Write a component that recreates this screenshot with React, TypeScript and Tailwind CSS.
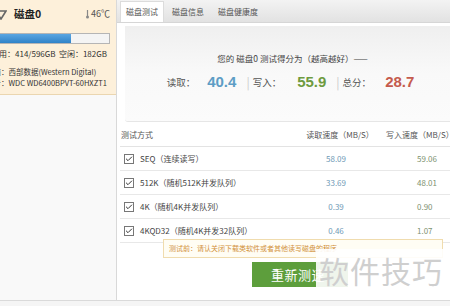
import { Check } from 'lucide-react'

const rows = [
  { name: 'SEQ（连续读写）', read: '58.09', write: '59.06' },
  { name: '512K（随机512K并发队列）', read: '33.69', write: '48.01' },
  { name: '4K（随机4K并发队列）', read: '0.39', write: '0.90' },
  { name: '4KQD32（随机4K并发32队列）', read: '0.46', write: '1.07' },
]

function DiskPanel() {
  return (
    <div className="w-[117px] shrink-0 flex flex-col border-r border-[#d9d9d9] bg-[#f9f9f9] overflow-hidden">
      <div className="h-[95px] bg-[#fdf0da] border-b border-[#ebd6b0] text-[#333]">
        <div className="h-[28px] flex items-center">
          <svg width="12" height="10" viewBox="0 0 12 10" className="-ml-[5px] mt-[1px]">
            <path d="M1 1 L11 1 L6 9 Z" fill="none" stroke="#666" strokeWidth="1.6" />
          </svg>
          <span className="ml-[7px] text-[10.5px] font-bold text-[#222]">磁盘0</span>
          <span className="ml-auto mr-[6px] flex items-center text-[9px] text-[#555]">
            <svg width="5" height="10" viewBox="0 0 5 10" className="mr-[1px]">
              <path d="M2.5 1 V7" stroke="#888" strokeWidth="1.2" />
              <circle cx="2.5" cy="8" r="1.5" fill="#888" />
            </svg>
            46℃
          </span>
        </div>
        <div className="h-[11px] mt-[5px] mr-[6px] -ml-[2px] border border-[#b5b5b5] bg-[#f4f4f4] flex">
          <div className="w-[72px] h-full bg-gradient-to-b from-[#5aa6e2] to-[#2f83c8]" />
        </div>
        <div className="mt-[4px] flex text-[8px] leading-[12px]">
          <span className="-ml-[9px]">已用：414/596GB</span>
          <span className="ml-auto mr-[9px]">空闲：182GB</span>
        </div>
        <div className="mt-[6px] text-[7.5px] leading-[11px] whitespace-nowrap">
          <div className="-ml-[14px]">厂商：西部数据(Western Digital)</div>
          <div className="-ml-[14px]">型号：WDC WD6400BPVT-60HXZT1</div>
        </div>
      </div>
    </div>
  )
}

function Tabs() {
  return (
    <div className="h-[23px] shrink-0 bg-gradient-to-b from-[#f3f3f3] to-[#e2e2e2] border-b border-[#d6d6d6] flex items-end text-[8px] text-[#555]">
      <div className="ml-[3px] h-[21px] w-[44px] bg-white flex items-center justify-center border-t border-x border-[#dcdcdc]">
        磁盘测试
      </div>
      <div className="h-[21px] ml-[8px] flex items-center">磁盘信息</div>
      <div className="h-[21px] ml-[14px] flex items-center">磁盘健康度</div>
    </div>
  )
}

function ScorePanel() {
  return (
    <div className="ml-[8px] mt-[3px] h-[96px] bg-gradient-to-b from-[#efefef] via-[#f9f9f9] to-[#fbfbfb] border-b border-[#e6e6e6] rounded-bl-[3px] flex flex-col items-center">
      <div className="mt-[26px] text-[8.5px] text-[#444] pl-[10px]">您的 磁盘0 测试得分为（越高越好）——</div>
      <div className="mt-[6px] flex items-center text-[#555] ml-[6px]">
        <span className="text-[9.5px]">读取：</span>
        <span className="ml-[12px] text-[15px] font-bold text-[#5d9dc5] font-['Liberation_Sans',sans-serif]">40.4</span>
        <span className="ml-[10px] mr-[3px] text-[12px] text-[#ccc]">|</span>
        <span className="text-[9.5px]">写入：</span>
        <span className="ml-[16px] text-[15px] font-bold text-[#6e9b40] font-['Liberation_Sans',sans-serif]">55.9</span>
        <span className="ml-[10px] mr-[3px] text-[12px] text-[#ccc]">|</span>
        <span className="text-[9.5px]">总分：</span>
        <span className="ml-[14px] text-[15px] font-bold text-[#c55b4d] font-['Liberation_Sans',sans-serif]">28.7</span>
      </div>
    </div>
  )
}

function ResultTable() {
  return (
    <div className="ml-[3px] w-[360px] text-[8px]">
      <div className="h-[24px] mt-[1px] grid grid-cols-[180px_80px_100px] items-center border-b border-[#e3e3e3] text-[#555]">
        <span className="pl-[1px]">测试方式</span>
        <span className="text-center">读取速度（MB/S）</span>
        <span className="pl-[6px]">写入速度（MB/S）</span>
      </div>
      {rows.map((r) => (
        <div key={r.name} className="h-[24px] grid grid-cols-[180px_80px_100px] items-center border-b border-[#e8e8e8]">
          <span className="flex items-center text-[#444]">
            <span className="ml-[4px] w-[10px] h-[10px] border border-[#777] bg-white flex items-center justify-center">
              <Check size={8} strokeWidth={3} color="#333" />
            </span>
            <span className="ml-[6px]">{r.name}</span>
          </span>
          <span className="text-center text-[#6f9ab6] pr-[8px]">{r.read}</span>
          <span className="pl-[37px] text-[#7e9270]">{r.write}</span>
        </div>
      ))}
    </div>
  )
}

export default function App() {
  return (
    <div className="relative w-[450px] h-[306px] overflow-hidden bg-white flex flex-col font-['Noto_Sans_CJK_SC',sans-serif]">
      <div className="h-[300px] flex">
        <DiskPanel />
        <div className="flex-1 flex flex-col overflow-hidden">
          <Tabs />
          <ScorePanel />
          <ResultTable />
          <button className="mt-[19px] ml-[135px] w-[96px] h-[25px] bg-[#5d9e3c] text-white text-[13px] leading-[25px] text-left pl-[19px] tracking-[0.5px]">
            重新测速
          </button>
        </div>
      </div>
      <div className="flex-1 border-t border-[#dadada] bg-[#f5f5f5]" />

      <div className="absolute left-[163px] top-[239px] w-[280px] h-[19px] bg-[#fffdf4] border border-[#f0dcae] flex items-center pl-[5px] text-[7px] text-[#d2913a] whitespace-nowrap overflow-hidden">
        测试前：请认关闭下载类软件或者其他读写磁盘的程序
      </div>

      <div className="absolute left-[316px] top-[249px] w-[130px] h-[42px] bg-white/90 flex items-center justify-center text-[30px] text-[#cfcfcf] tracking-[1px]">
        软件技巧
      </div>
    </div>
  )
}
